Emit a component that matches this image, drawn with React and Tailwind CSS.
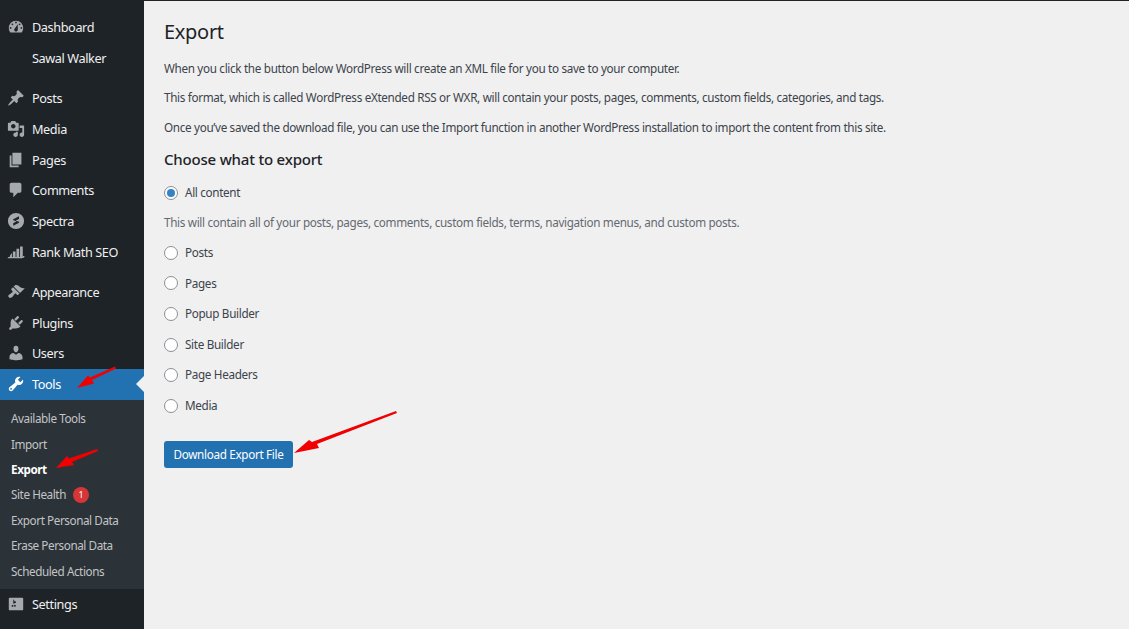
const icons = {
  dashboard: 'M3.76 16h12.48c1.1-1.37 1.76-3.11 1.76-5 0-4.42-3.58-8-8-8s-8 3.58-8 8c0 1.89.66 3.63 1.76 5zM10 4c.55 0 1 .45 1 1s-.45 1-1 1-1-.45-1-1 .45-1 1-1zM6 6c.55 0 1 .45 1 1s-.45 1-1 1-1-.45-1-1 .45-1 1-1zm8 0c.55 0 1 .45 1 1s-.45 1-1 1-1-.45-1-1 .45-1 1-1zm-5.37 5.55L12 7v6c0 1.1-.9 2-2 2s-2-.9-2-2c0-.57.24-1.08.63-1.45zM4 10c.55 0 1 .45 1 1s-.45 1-1 1-1-.45-1-1 .45-1 1-1zm12 0c.55 0 1 .45 1 1s-.45 1-1 1-1-.45-1-1 .45-1 1-1z',
  posts: 'M10.44 3.02l1.82-1.82 6.36 6.35-1.83 1.82c-1.05-.68-2.48-.57-3.41.36l-.75.75c-.92.93-1.04 2.35-.35 3.41l-1.83 1.82-2.41-2.41-2.8 2.79c-.42.42-3.38 2.71-3.8 2.29s1.86-3.39 2.28-3.81l2.79-2.79L4.1 9.36l1.83-1.82c1.05.69 2.48.57 3.4-.36l.75-.75c.93-.92 1.05-2.35.36-3.41z',
  media: 'M13 11V4c0-.55-.45-1-1-1h-1.67L9 1H5L3.67 3H2c-.55 0-1 .45-1 1v7c0 .55.45 1 1 1h10c.55 0 1-.45 1-1zM7 4.5c1.38 0 2.5 1.12 2.5 2.5S8.38 9.5 7 9.5 4.5 8.38 4.5 7 5.62 4.5 7 4.5zM14 6h5v10.5c0 1.38-1.12 2.5-2.5 2.5S14 17.88 14 16.5s1.12-2.5 2.5-2.5c.17 0 .34.02.5.05V9h-3V6zm-4 8.05V13h2v3.5c0 1.38-1.12 2.5-2.5 2.5S7 17.88 7 16.5 8.12 14 9.5 14c.17 0 .34.02.5.05z',
  pages: 'M6 15V2h10v13H6zm-1 1h8v2H3V5h2v11z',
  comments: 'M5 2h9c1.1 0 2 .9 2 2v7c0 1.1-.9 2-2 2h-2l-5 5v-5H5c-1.1 0-2-.9-2-2V4c0-1.1.9-2 2-2z',
  spectra: 'M10 1a9 9 0 1 0 0 18a9 9 0 0 0 0-18zM13.3 4.6v3.1L9.6 9.4l3.6 1.5c.5.2.5.7.1 1L7 15.4v-3.1l3.7-1.8-3.6-1.4c-.5-.2-.5-.8-.1-1z',
  rank: 'M6.5 9.5h3v6h-3zM10.5 6.5h3v9h-3zM14.5 4h3v11.5h-3zM5.5 11v4.5H1.6L.5 17h16l2.500-1 .5-1.500h-1.500l-1 1H3.400l-.5-.5 1-2z',
  appearance: 'M14.48 11.06L7.41 3.99l1.5-1.5c.5-.56 2.3-.47 3.51.32 1.21.8 1.43 1.28 2.91 2.1 1.18.64 2.45 1.26 4.45.85zm-.71.71L6.7 4.7 4.93 6.47c-.39.39-.39 1.02 0 1.41l1.06 1.06c.39.39.39 1.03 0 1.42-.6.6-1.43 1.11-2.21 1.69-.35.26-.7.53-1.01.84C1.43 13.23.91 14.8 2.06 15.95c1.14 1.15 2.72.63 4.04-.67.31-.31.58-.66.84-1.01.58-.78 1.09-1.61 1.69-2.21.39-.39 1.02-.39 1.41 0l1.06 1.06c.39.39 1.02.39 1.41 0z',
  plugins: 'M13.11 4.36L9.87 7.6 8 5.73l3.24-3.24c.35-.34 1.05-.2 1.56.32.52.51.66 1.21.31 1.55zm-8 1.77l.91-1.12 9.01 9.01-1.19.84c-.71.71-2.63 1.16-3.82 1.16H6.14L4.9 17.26c-.59.59-1.54.59-2.12 0-.59-.58-.59-1.53 0-2.12l1.24-1.24v-3.88c0-1.13.4-3.19 1.09-3.89zm7.26 3.97l3.24-3.24c.34-.35 1.04-.21 1.55.31.52.51.66 1.21.31 1.55l-3.24 3.25z',
  users: 'M10 9.25c-2.27 0-2.73-3.44-2.73-3.44C7 4.02 7.82 2 9.97 2c2.16 0 2.98 2.02 2.71 3.81 0 0-.41 3.44-2.68 3.44zm0 2.57L12.72 10c2.39 0 4.52 2.33 4.52 4.53v2.49s-3.65 1.13-7.24 1.13c-3.65 0-7.24-1.13-7.24-1.13v-2.49c0-2.25 1.94-4.48 4.47-4.48z',
  tools: 'M16.68 9.77c-1.34 1.34-3.3 1.67-4.95.99l-5.41 6.52c-.99.99-2.59.99-3.58 0s-.99-2.59 0-3.57l6.52-5.42c-.68-1.65-.35-3.61.99-4.95 1.28-1.28 3.12-1.62 4.72-1.06l-2.89 2.89 2.82 2.82 2.86-2.87c.53 1.58.18 3.39-1.08 4.65zM3.81 16.21c.4.39 1.04.39 1.43 0 .4-.4.4-1.04 0-1.43-.39-.4-1.03-.4-1.43 0-.39.39-.39 1.03 0 1.43z',
  settings: 'M18 16V4c0-.55-.45-1-1-1H3c-.55 0-1 .45-1 1v12c0 .55.45 1 1 1h14c.55 0 1-.45 1-1zM8 11h1c.55 0 1 .45 1 1s-.45 1-1 1H8v1.5c0 .28-.22.5-.5.5s-.5-.22-.5-.5V13H6c-.55 0-1-.45-1-1s.45-1 1-1h1V5.5c0-.28.22-.5.5-.5s.5.22.5.5V7h1c.55 0 1 .45 1 1s-.45 1-1 1h-1v5.5c0 .28-.22.5-.5.5s-.5-.22-.5-.5V9z',
};

function Icon({ name, active }) {
  return (
    <svg viewBox="0 0 20 20" className={`h-[18px] w-[18px] shrink-0 ${active ? 'text-white' : 'text-[#a7aaad]'}`} fill="currentColor">
      <path d={icons[name]} fillRule="evenodd" />
    </svg>
  );
}

function MenuItem({ icon, label, active }) {
  return (
    <div className={`relative flex h-[30.8px] items-center gap-[7px] pl-[7px] text-[12.7px] tracking-[-0.4px] text-[#f0f0f1] ${active ? 'bg-[#2271b1] text-white' : ''}`}>
      {icon ? <Icon name={icon} active={active} /> : <span className="w-[18px] shrink-0" />}
      <span className="pt-px">{label}</span>
      {active && <span className="absolute right-0 top-1/2 h-0 w-0 -translate-y-1/2 border-y-[8px] border-r-[8px] border-y-transparent border-r-[#f0f0f1]" />}
    </div>
  );
}

function SubItem({ label, current, badge }) {
  return (
    <div className={`flex h-[25.4px] items-center gap-[7px] pl-[11px] text-[11.7px] tracking-[-0.42px] ${current ? 'font-bold text-white' : 'text-[#c3c4c7]'}`}>
      <span>{label}</span>
      {badge && <span className="grid h-[16px] w-[16px] place-items-center rounded-full bg-[#d63638] text-[9px] text-white">{badge}</span>}
    </div>
  );
}

function Radio({ label, checked }) {
  return (
    <label className="flex h-[16px] items-center gap-[7px] text-[#3c434a]">
      <span className="grid h-[14px] w-[14px] place-items-center rounded-full border border-[#8c8f94] bg-white">
        {checked && <span className="h-[8px] w-[8px] rounded-full bg-[#3582c4]" />}
      </span>
      <span>{label}</span>
    </label>
  );
}

export default function App() {
  return (
    <div className="relative flex h-screen overflow-hidden bg-[#f0f0f1] font-['Noto_Sans','Open_Sans',sans-serif]">
      <aside className="flex w-[144px] shrink-0 flex-col bg-[#1d2327] pt-[12.1px]">
        <MenuItem icon="dashboard" label="Dashboard" />
        <MenuItem label="Sawal Walker" />
        <div className="h-[9px]" />
        <MenuItem icon="posts" label="Posts" />
        <MenuItem icon="media" label="Media" />
        <MenuItem icon="pages" label="Pages" />
        <MenuItem icon="comments" label="Comments" />
        <MenuItem icon="spectra" label="Spectra" />
        <MenuItem icon="rank" label="Rank Math SEO" />
        <div className="h-[9px]" />
        <MenuItem icon="appearance" label="Appearance" />
        <MenuItem icon="plugins" label="Plugins" />
        <MenuItem icon="users" label="Users" />
        <MenuItem icon="tools" label="Tools" active />
        <div className="bg-[#2c3338] pb-[5.100px] pt-[6.600px]">
          <SubItem label="Available Tools" />
          <SubItem label="Import" />
          <SubItem label="Export" current />
          <SubItem label="Site Health" badge="1" />
          <SubItem label="Export Personal Data" />
          <SubItem label="Erase Personal Data" />
          <SubItem label="Scheduled Actions" />
        </div>
        <MenuItem icon="settings" label="Settings" />
      </aside>

      <main className="flex-1 border-t border-[#1d2327] pl-[20px] text-[11.7px] tracking-[-0.32px] text-[#3c434a]">
        <h1 className="mt-[16px] text-[20px] leading-[30px] tracking-[-0.3px] text-[#1d2327]">Export</h1>
        <p className="mt-[13px] leading-[16px]">When you click the button below WordPress will create an XML file for you to save to your computer.</p>
        <p className="mt-[13px] leading-[16px]">This format, which is called WordPress eXtended RSS or WXR, will contain your posts, pages, comments, custom fields, categories, and tags.</p>
        <p className="mt-[14px] leading-[16px]">Once you’ve saved the download file, you can use the Import function in another WordPress installation to import the content from this site.</p>
        <h2 className="mt-[13px] text-[15px] font-medium leading-[22px] tracking-[-0.2px] text-[#1d2327]">Choose what to export</h2>
        <div className="mt-[15px]"><Radio label="All content" checked /></div>
        <p className="mt-[13px] leading-[16px] text-[#646970]">This will contain all of your posts, pages, comments, custom fields, terms, navigation menus, and custom posts.</p>
        <div className="mt-[14.800px] flex flex-col gap-[14.6px]">
          <Radio label="Posts" />
          <Radio label="Pages" />
          <Radio label="Popup Builder" />
          <Radio label="Site Builder" />
          <Radio label="Page Headers" />
          <Radio label="Media" />
        </div>
        <button className="mt-[27.200px] h-[27px] w-[129px] rounded-[3px] bg-[#2271b1] pt-px text-[11.7px] text-white">Download Export File</button>
      </main>

      {/* red annotation arrows drawn over the screenshot */}
      <svg className="pointer-events-none absolute inset-0 h-full w-full" viewBox="0 0 1129 629" fill="#f00000">
        <path d="M115 366.5L116 368.5L92 380L94 383.5L77 388L88 375.5L90 377.5z" />
        <path d="M97 449L98 451L72 462L74 465L56 468L67 456L69 458.5z" />
        <path d="M396 411L397 413L317 444L319 448L294 453L309 440L312 442z" />
      </svg>
    </div>
  );
}
